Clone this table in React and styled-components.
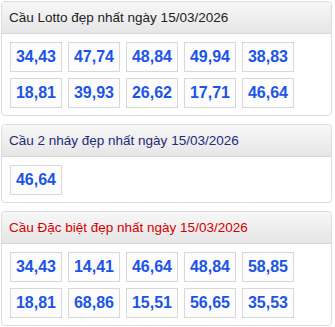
import React from 'react'
import styled, { createGlobalStyle } from 'styled-components'

const GlobalStyle = createGlobalStyle`
    body {
        margin: 0;
        background: #fff;
        font-family: "Liberation Sans", Arial, sans-serif;
    }
`

const Page = styled.div`
    padding: 1px 3px 0 1px;
    display: flex;
    flex-direction: column;
    gap: 8px;
`

const Panel = styled.div`
    border: 1px solid #dcdcdc;
    border-radius: 4px;
    overflow: hidden;
    background: #fff;
`

const Title = styled.div`
    height: 31px;
    display: flex;
    align-items: center;
    padding: 0 7px;
    font-size: 13.5px;
    color: ${props => props.color || '#222'};
    background: linear-gradient(to bottom, #f7f7f7 0%, #e6e6e6 100%);
    border-bottom: 1px solid #d6d6d6;
`

const Grid = styled.div`
    display: flex;
    flex-wrap: wrap;
    gap: 6px;
    padding: 8px 8px 7px;
`

const Cell = styled.div`
    box-sizing: border-box;
    width: 52px;
    height: 30px;
    display: flex;
    align-items: center;
    justify-content: center;
    border: 1px solid #d8d8d8;
    background: #fcfcfc;
    color: #1c55e6;
    font-weight: bold;
    font-size: 16px;
`

const panels = [
    {
        title: 'Cầu Lotto đẹp nhất ngày 15/03/2026',
        numbers: ['34,43', '47,74', '48,84', '49,94', '38,83', '18,81', '39,93', '26,62', '17,71', '46,64'],
    },
    {
        title: 'Cầu 2 nháy đẹp nhất ngày 15/03/2026',
        color: '#1f2a7a',
        numbers: ['46,64'],
    },
    {
        title: 'Cầu Đặc biệt đẹp nhất ngày 15/03/2026',
        color: '#d40000',
        numbers: ['34,43', '14,41', '46,64', '48,84', '58,85', '18,81', '68,86', '15,51', '56,65', '35,53'],
    },
]

const App = () => {
    return (
        <>
            <GlobalStyle />
            <Page>
                {panels.map(p => (
                    <Panel key={p.title}>
                        <Title color={p.color}>{p.title}</Title>
                        <Grid>
                            {p.numbers.map((n, i) => <Cell key={i}>{n}</Cell>)}
                        </Grid>
                    </Panel>
                ))}
            </Page>
        </>
    )
}

export default App
